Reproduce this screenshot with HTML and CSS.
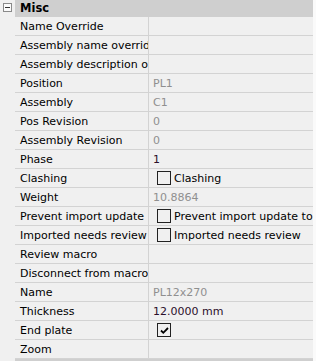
FILE: index.html
```html
<!DOCTYPE html>
<html lang="en">

<head>
  <meta charset="UTF-8">
  <title>Properties</title>
  <link rel="stylesheet" href="styles.css">
</head>
<body>
  <div class="grid">
    <div class="gutter">
      <span class="toggle"></span>
    </div>
    <div class="props">
      <div class="cat">Misc</div>
      <div class="row"><div class="name">Name Override</div><div class="val"></div></div>
      <div class="row"><div class="name">Assembly name override</div><div class="val"></div></div>
      <div class="row"><div class="name">Assembly description override</div><div class="val"></div></div>
      <div class="row"><div class="name">Position</div><div class="val ro">PL1</div></div>
      <div class="row"><div class="name">Assembly</div><div class="val ro">C1</div></div>
      <div class="row"><div class="name">Pos Revision</div><div class="val ro">0</div></div>
      <div class="row"><div class="name">Assembly Revision</div><div class="val ro">0</div></div>
      <div class="row"><div class="name">Phase</div><div class="val set">1</div></div>
      <div class="row"><div class="name">Clashing</div><div class="val"><span class="check"></span>Clashing</div></div>
      <div class="row"><div class="name">Weight</div><div class="val ro">10.8864</div></div>
      <div class="row"><div class="name">Prevent import update</div><div class="val"><span class="check"></span>Prevent import update to</div></div>
      <div class="row"><div class="name">Imported needs review</div><div class="val"><span class="check"></span>Imported needs review</div></div>
      <div class="row"><div class="name">Review macro</div><div class="val"></div></div>
      <div class="row"><div class="name">Disconnect from macro</div><div class="val"></div></div>
      <div class="row"><div class="name">Name</div><div class="val ro">PL12x270</div></div>
      <div class="row"><div class="name">Thickness</div><div class="val set">12.0000 mm</div></div>
      <div class="row"><div class="name">End plate</div><div class="val">
        <span class="check on">
          <svg width="11" height="11" viewBox="0 0 11 11"><path d="M2 5.5 L4.3 7.8 L9 3" fill="none" stroke="#000" stroke-width="1.8"/></svg>
        </span>
      </div></div>
      <div class="row"><div class="name">Zoom</div><div class="val"></div></div>
      <div class="foot"></div>
    </div>
  </div>
</body>

</html>
```

FILE: styles.css
```css
* {
  margin: 0;
  padding: 0;
  box-sizing: border-box;
}

body {
  width: 316px;
  height: 361px;
  overflow: hidden;
  background: #f0f0f0;
  font-family: "DejaVu Sans", sans-serif;
  font-size: 11px;
  color: #000;
}

.grid {
  display: flex;
  height: 361px;
}

.gutter {
  width: 15px;
  flex: none;
  padding: 3px 0 0 3px;
}

.toggle {
  display: block;
  width: 9px;
  height: 9px;
  border: 1px solid #8a8a8a;
  background: #fafafa;
  position: relative;
}

.toggle::after {
  content: "";
  position: absolute;
  left: 1px;
  top: 3px;
  width: 5px;
  height: 1px;
  background: #333;
}

.props {
  flex: 1;
  display: flex;
  flex-direction: column;
  border-right: 3px solid #fafafa;
}

.cat {
  height: 17px;
  line-height: 17px;
  padding-left: 5px;
  background: #cfcfcf;
  font-weight: bold;
  font-size: 11.5px;
}

.row {
  display: grid;
  grid-template-columns: 134px 1fr;
  height: 19px;
  border-bottom: 1px solid #d3d3d3;
  line-height: 19px;
  white-space: nowrap;
}

.name {
  padding-left: 5px;
  border-right: 1px solid #d3d3d3;
  overflow: hidden;
}

.val {
  padding-left: 4px;
  overflow: hidden;
  display: flex;
  align-items: center;
}

.ro {
  color: #8f8f8f;
}

.set {
  color: #2b0f2b;
}

.check {
  width: 14px;
  height: 14px;
  border: 1px solid #222;
  margin: 0 3px 0 4px;
  flex: none;
  display: flex;
  align-items: center;
  justify-content: center;
}

.foot {
  flex: 1;
  background: #cfcfcf;
}
```
